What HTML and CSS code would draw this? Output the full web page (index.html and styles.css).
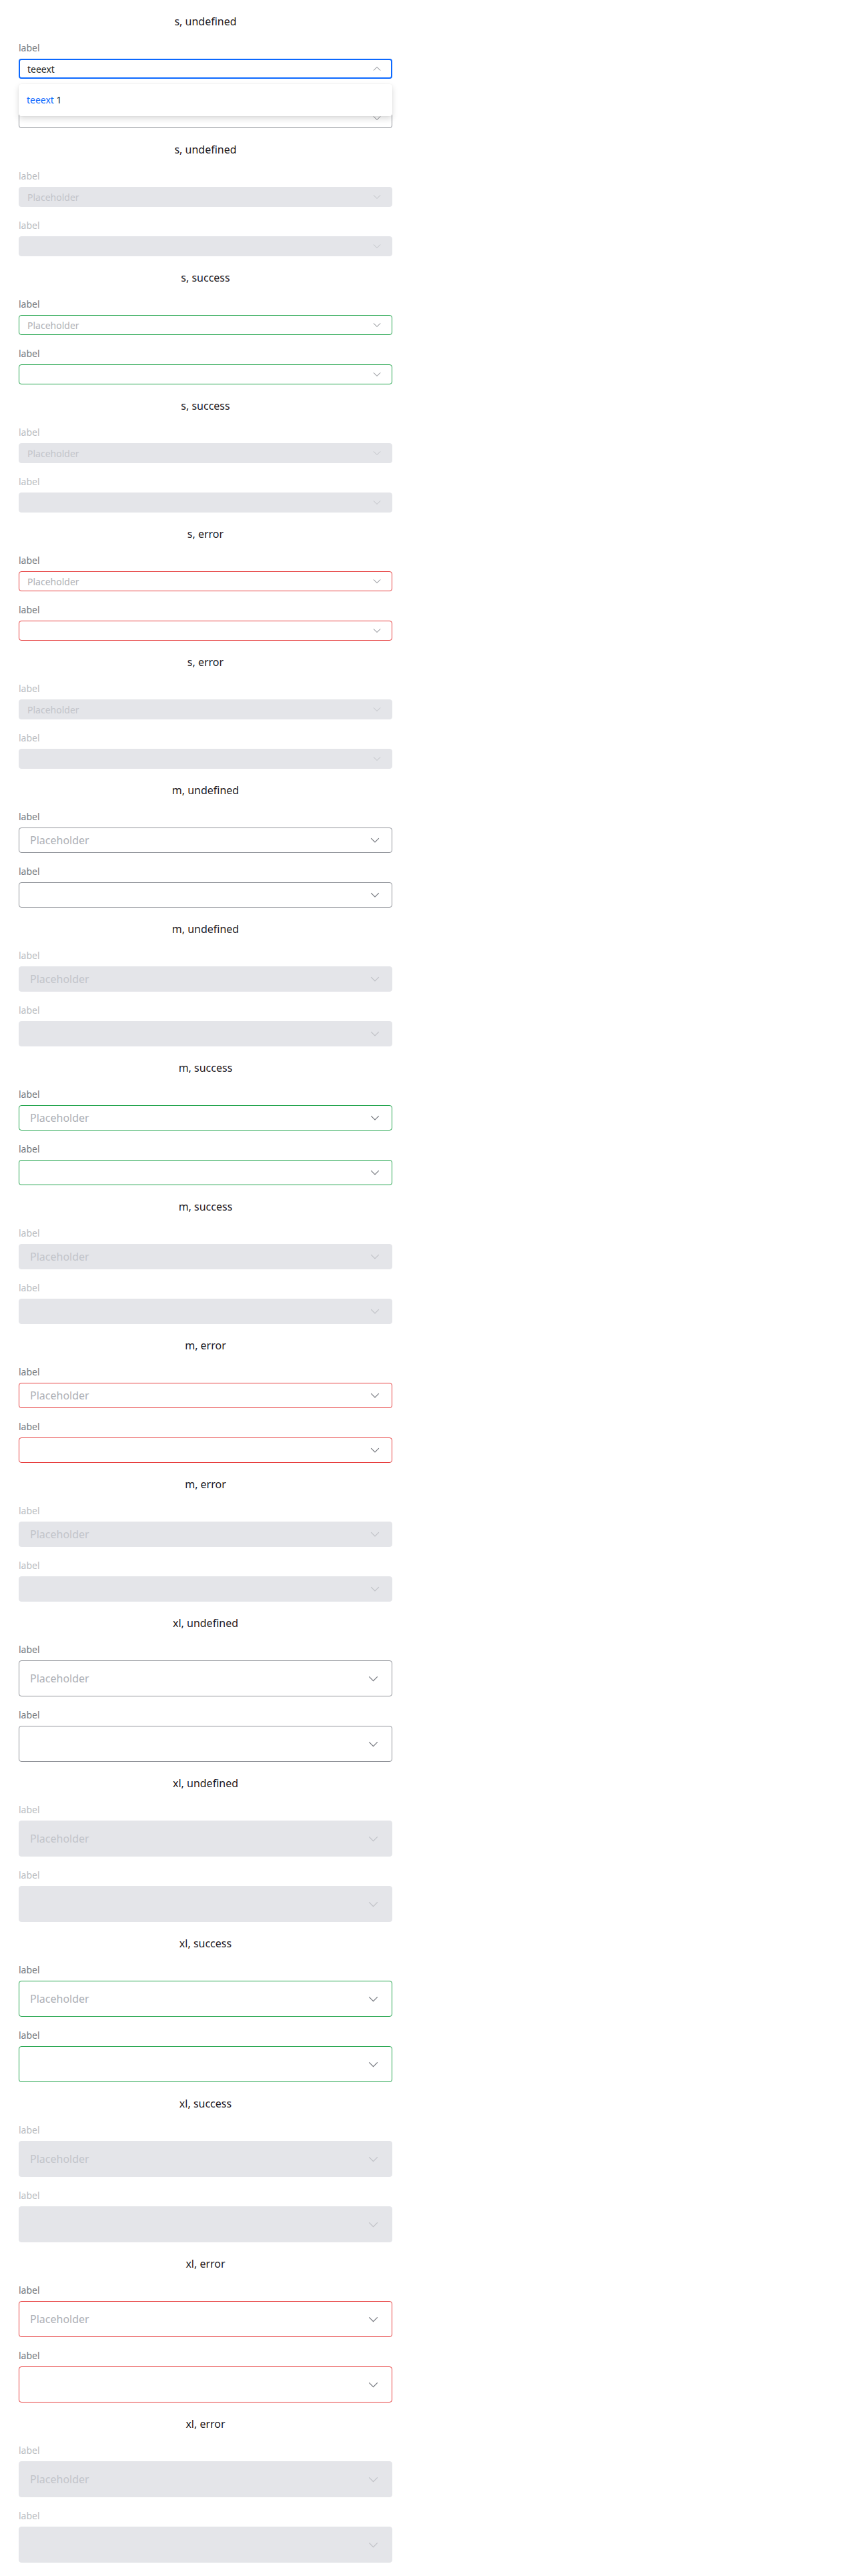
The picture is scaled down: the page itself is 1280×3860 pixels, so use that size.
FILE: index.html
```html
<!DOCTYPE html>
<html lang="en">
<head>
<meta charset="utf-8">
<title>Select states</title>
<link rel="stylesheet" href="styles.css">
</head>
<body>
<div class="page">

  <section class="section s">
    <div class="title">s, undefined</div>
    <div class="field">
      <div class="label">label</div>
      <div class="box focus">
        <span class="value">teeext</span>
        <svg class="chev" viewBox="0 0 12 12"><path d="M1 8.5 L6 3.5 L11 8.5"/></svg>
      </div>
      <div class="menu">
        <div class="option"><span class="match">teeext</span> 1</div>
      </div>
    </div>
    <div class="field">
      <div class="label hidden-under">label</div>
      <div class="box"><span class="value"></span><svg class="chev" viewBox="0 0 12 12"><path d="M1 3.5 L6 8.5 L11 3.5"/></svg></div>
    </div>
  </section>

  <section class="section s disabled">
    <div class="title">s, undefined</div>
    <div class="field"><div class="label">label</div><div class="box"><span class="value placeholder">Placeholder</span><svg class="chev" viewBox="0 0 12 12"><path d="M1 3.5 L6 8.5 L11 3.5"/></svg></div></div>
    <div class="field"><div class="label">label</div><div class="box"><span class="value"></span><svg class="chev" viewBox="0 0 12 12"><path d="M1 3.5 L6 8.5 L11 3.5"/></svg></div></div>
  </section>

  <section class="section s success">
    <div class="title">s, success</div>
    <div class="field"><div class="label">label</div><div class="box"><span class="value placeholder">Placeholder</span><svg class="chev" viewBox="0 0 12 12"><path d="M1 3.5 L6 8.5 L11 3.5"/></svg></div></div>
    <div class="field"><div class="label">label</div><div class="box"><span class="value"></span><svg class="chev" viewBox="0 0 12 12"><path d="M1 3.5 L6 8.5 L11 3.5"/></svg></div></div>
  </section>

  <section class="section s disabled">
    <div class="title">s, success</div>
    <div class="field"><div class="label">label</div><div class="box"><span class="value placeholder">Placeholder</span><svg class="chev" viewBox="0 0 12 12"><path d="M1 3.5 L6 8.5 L11 3.5"/></svg></div></div>
    <div class="field"><div class="label">label</div><div class="box"><span class="value"></span><svg class="chev" viewBox="0 0 12 12"><path d="M1 3.5 L6 8.5 L11 3.5"/></svg></div></div>
  </section>

  <section class="section s error">
    <div class="title">s, error</div>
    <div class="field"><div class="label">label</div><div class="box"><span class="value placeholder">Placeholder</span><svg class="chev" viewBox="0 0 12 12"><path d="M1 3.5 L6 8.5 L11 3.5"/></svg></div></div>
    <div class="field"><div class="label">label</div><div class="box"><span class="value"></span><svg class="chev" viewBox="0 0 12 12"><path d="M1 3.5 L6 8.5 L11 3.5"/></svg></div></div>
  </section>

  <section class="section s disabled">
    <div class="title">s, error</div>
    <div class="field"><div class="label">label</div><div class="box"><span class="value placeholder">Placeholder</span><svg class="chev" viewBox="0 0 12 12"><path d="M1 3.5 L6 8.5 L11 3.5"/></svg></div></div>
    <div class="field"><div class="label">label</div><div class="box"><span class="value"></span><svg class="chev" viewBox="0 0 12 12"><path d="M1 3.5 L6 8.5 L11 3.5"/></svg></div></div>
  </section>

  <section class="section m">
    <div class="title">m, undefined</div>
    <div class="field"><div class="label">label</div><div class="box"><span class="value placeholder">Placeholder</span><svg class="chev" viewBox="0 0 12 12"><path d="M1 3.5 L6 8.5 L11 3.5"/></svg></div></div>
    <div class="field"><div class="label">label</div><div class="box"><span class="value"></span><svg class="chev" viewBox="0 0 12 12"><path d="M1 3.5 L6 8.5 L11 3.5"/></svg></div></div>
  </section>

  <section class="section m disabled">
    <div class="title">m, undefined</div>
    <div class="field"><div class="label">label</div><div class="box"><span class="value placeholder">Placeholder</span><svg class="chev" viewBox="0 0 12 12"><path d="M1 3.5 L6 8.5 L11 3.5"/></svg></div></div>
    <div class="field"><div class="label">label</div><div class="box"><span class="value"></span><svg class="chev" viewBox="0 0 12 12"><path d="M1 3.5 L6 8.5 L11 3.5"/></svg></div></div>
  </section>

  <section class="section m success">
    <div class="title">m, success</div>
    <div class="field"><div class="label">label</div><div class="box"><span class="value placeholder">Placeholder</span><svg class="chev" viewBox="0 0 12 12"><path d="M1 3.5 L6 8.5 L11 3.5"/></svg></div></div>
    <div class="field"><div class="label">label</div><div class="box"><span class="value"></span><svg class="chev" viewBox="0 0 12 12"><path d="M1 3.5 L6 8.5 L11 3.5"/></svg></div></div>
  </section>

  <section class="section m disabled">
    <div class="title">m, success</div>
    <div class="field"><div class="label">label</div><div class="box"><span class="value placeholder">Placeholder</span><svg class="chev" viewBox="0 0 12 12"><path d="M1 3.5 L6 8.5 L11 3.5"/></svg></div></div>
    <div class="field"><div class="label">label</div><div class="box"><span class="value"></span><svg class="chev" viewBox="0 0 12 12"><path d="M1 3.5 L6 8.5 L11 3.5"/></svg></div></div>
  </section>

  <section class="section m error">
    <div class="title">m, error</div>
    <div class="field"><div class="label">label</div><div class="box"><span class="value placeholder">Placeholder</span><svg class="chev" viewBox="0 0 12 12"><path d="M1 3.5 L6 8.5 L11 3.5"/></svg></div></div>
    <div class="field"><div class="label">label</div><div class="box"><span class="value"></span><svg class="chev" viewBox="0 0 12 12"><path d="M1 3.5 L6 8.5 L11 3.5"/></svg></div></div>
  </section>

  <section class="section m disabled">
    <div class="title">m, error</div>
    <div class="field"><div class="label">label</div><div class="box"><span class="value placeholder">Placeholder</span><svg class="chev" viewBox="0 0 12 12"><path d="M1 3.5 L6 8.5 L11 3.5"/></svg></div></div>
    <div class="field"><div class="label">label</div><div class="box"><span class="value"></span><svg class="chev" viewBox="0 0 12 12"><path d="M1 3.5 L6 8.5 L11 3.5"/></svg></div></div>
  </section>

  <section class="section xl">
    <div class="title">xl, undefined</div>
    <div class="field"><div class="label">label</div><div class="box"><span class="value placeholder">Placeholder</span><svg class="chev" viewBox="0 0 12 12"><path d="M1 3.5 L6 8.5 L11 3.5"/></svg></div></div>
    <div class="field"><div class="label">label</div><div class="box"><span class="value"></span><svg class="chev" viewBox="0 0 12 12"><path d="M1 3.5 L6 8.5 L11 3.5"/></svg></div></div>
  </section>

  <section class="section xl disabled">
    <div class="title">xl, undefined</div>
    <div class="field"><div class="label">label</div><div class="box"><span class="value placeholder">Placeholder</span><svg class="chev" viewBox="0 0 12 12"><path d="M1 3.5 L6 8.5 L11 3.5"/></svg></div></div>
    <div class="field"><div class="label">label</div><div class="box"><span class="value"></span><svg class="chev" viewBox="0 0 12 12"><path d="M1 3.5 L6 8.5 L11 3.5"/></svg></div></div>
  </section>

  <section class="section xl success">
    <div class="title">xl, success</div>
    <div class="field"><div class="label">label</div><div class="box"><span class="value placeholder">Placeholder</span><svg class="chev" viewBox="0 0 12 12"><path d="M1 3.5 L6 8.5 L11 3.5"/></svg></div></div>
    <div class="field"><div class="label">label</div><div class="box"><span class="value"></span><svg class="chev" viewBox="0 0 12 12"><path d="M1 3.5 L6 8.5 L11 3.5"/></svg></div></div>
  </section>

  <section class="section xl disabled">
    <div class="title">xl, success</div>
    <div class="field"><div class="label">label</div><div class="box"><span class="value placeholder">Placeholder</span><svg class="chev" viewBox="0 0 12 12"><path d="M1 3.5 L6 8.5 L11 3.5"/></svg></div></div>
    <div class="field"><div class="label">label</div><div class="box"><span class="value"></span><svg class="chev" viewBox="0 0 12 12"><path d="M1 3.5 L6 8.5 L11 3.5"/></svg></div></div>
  </section>

  <section class="section xl error">
    <div class="title">xl, error</div>
    <div class="field"><div class="label">label</div><div class="box"><span class="value placeholder">Placeholder</span><svg class="chev" viewBox="0 0 12 12"><path d="M1 3.5 L6 8.5 L11 3.5"/></svg></div></div>
    <div class="field"><div class="label">label</div><div class="box"><span class="value"></span><svg class="chev" viewBox="0 0 12 12"><path d="M1 3.5 L6 8.5 L11 3.5"/></svg></div></div>
  </section>

  <section class="section xl disabled">
    <div class="title">xl, error</div>
    <div class="field"><div class="label">label</div><div class="box"><span class="value placeholder">Placeholder</span><svg class="chev" viewBox="0 0 12 12"><path d="M1 3.5 L6 8.5 L11 3.5"/></svg></div></div>
    <div class="field"><div class="label">label</div><div class="box"><span class="value"></span><svg class="chev" viewBox="0 0 12 12"><path d="M1 3.5 L6 8.5 L11 3.5"/></svg></div></div>
  </section>

</div>
</body>
</html>
```

FILE: styles.css
```css
html, body {
  margin: 0;
  padding: 0;
  background: #ffffff;
}

body {
  font-family: "Noto Sans", "Open Sans", sans-serif;
  color: #1d1f24;
}

.page {
  width: 560px;
  padding: 20px 28px 0;
  display: flex;
  flex-direction: column;
}

.section {
  display: flex;
  flex-direction: column;
  gap: 20px;
  padding-bottom: 20px;
}

.title {
  text-align: center;
  font-size: 16px;
  line-height: 24px;
  color: #1f2126;
}

.field {
  position: relative;
  display: flex;
  flex-direction: column;
  gap: 8px;
}

.label {
  font-size: 14px;
  line-height: 16px;
  color: #73767c;
}

.box {
  box-sizing: border-box;
  display: flex;
  align-items: center;
  gap: 8px;
  height: 30px;
  padding: 0 12px;
  border: 1px solid #8f9298;
  border-radius: 4px;
  background: #ffffff;
}

.value {
  flex: 1;
  white-space: nowrap;
  overflow: hidden;
}

.placeholder {
  color: #aeb0b5;
}

.chev {
  flex: none;
  width: 12px;
  height: 12px;
  fill: none;
  stroke: #74777e;
  stroke-width: 1;
}

/* sizes */
.s .box {
  height: 30px;
  font-size: 14px;
  padding: 0 16px 0 12px;
}

.m .box {
  height: 38px;
  font-size: 16px;
  padding: 0 18px 0 16px;
}

.m .chev {
  width: 14px;
  height: 14px;
}

.xl .box {
  height: 54px;
  font-size: 16px;
  padding: 0 20px 0 16px;
}

.xl .chev {
  width: 15px;
  height: 15px;
}

/* states */
.success .box {
  border-color: #1fa34a;
}

.error .box {
  border-color: #e63c3c;
}

.box.focus {
  border: 2px solid #0b68ff;
  padding-left: 11px;
  padding-right: 15px;
}

.disabled .label {
  color: #b9bbc0;
}

.disabled .box {
  background: #e4e5e9;
  border-color: #e4e5e9;
}

.disabled .placeholder {
  color: #c2c4c9;
}

.disabled .chev {
  stroke: #bfc1c6;
}

/* dropdown menu, lies over the next field as in the reference */
.menu {
  position: absolute;
  left: 0;
  right: 0;
  top: 62px;
  z-index: 2;
  background: #ffffff;
  border-radius: 4px;
  box-shadow: 0 4px 10px rgba(0, 0, 0, 0.14), 0 0 2px rgba(0, 0, 0, 0.08);
  padding: 8px 0;
}

.option {
  height: 32px;
  line-height: 32px;
  padding: 0 12px;
  font-size: 14px;
  color: #1d1f24;
}

.match {
  color: #0b68ff;
}
```
